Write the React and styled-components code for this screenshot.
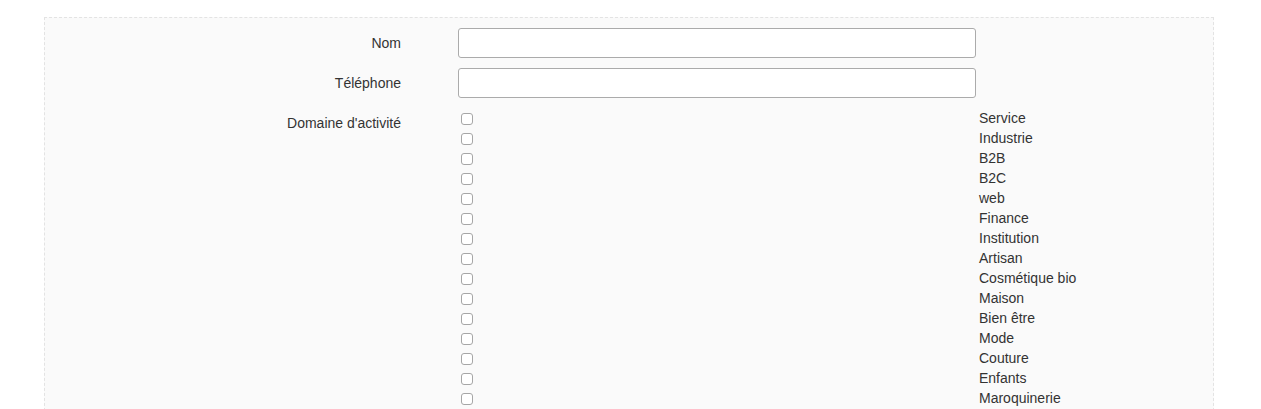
import React from "react";
import styled, { createGlobalStyle } from "styled-components";

const Global = createGlobalStyle`
  html, body { margin: 0; padding: 0; background: #ffffff; }
  body { font-family: "Liberation Sans", Arial, Helvetica, sans-serif; font-size: 14px; color: #333; }
`;

const Panel = styled.div`
  box-sizing: border-box;
  margin: 17px 0 0 44px;
  width: 1170px;
  border: 1px dashed #e3e3e3;
  background: #fafafa;
  padding: 10px 0 12px 0;
  display: flex;
  flex-direction: column;
  gap: 10px;
`;

const Row = styled.div`
  display: flex;
  align-items: ${(p) => (p.$top ? "flex-start" : "center")};
`;

const Label = styled.label`
  width: 356px;
  text-align: right;
  line-height: 20px;
  padding-top: ${(p) => (p.$top ? "5px" : "0")};
  margin-right: 57px;
  color: #333;
`;

const TextInput = styled.input`
  box-sizing: border-box;
  width: 518px;
  height: 30px;
  border: 1px solid #ababab;
  border-radius: 3px;
  background: #fff;
  padding: 0 6px;
  font: inherit;
  outline: none;
`;

const Options = styled.div`
  display: grid;
  grid-template-columns: 521px auto;
  grid-auto-rows: 20px;
  align-items: center;
`;

const Box = styled.input.attrs({ type: "checkbox" })`
  appearance: none;
  -webkit-appearance: none;
  box-sizing: border-box;
  width: 12px;
  height: 12px;
  margin: 1px 0 0 3px;
  border: 1px solid #a6a6a6;
  border-radius: 3px;
  background: #fff;
  justify-self: start;
`;

const OptionText = styled.span`
  line-height: 20px;
  color: #333;
`;

const domaines = [
  "Service",
  "Industrie",
  "B2B",
  "B2C",
  "web",
  "Finance",
  "Institution",
  "Artisan",
  "Cosmétique bio",
  "Maison",
  "Bien être",
  "Mode",
  "Couture",
  "Enfants",
  "Maroquinerie",
];

export default function App() {
  return (
    <>
      <Global />
      <Panel>
        <Row>
          <Label>Nom</Label>
          <TextInput type="text" />
        </Row>
        <Row>
          <Label>Téléphone</Label>
          <TextInput type="text" />
        </Row>
        <Row $top>
          <Label $top>Domaine d'activité</Label>
          <Options>
            {domaines.map((d) => (
              <React.Fragment key={d}>
                <Box />
                <OptionText>{d}</OptionText>
              </React.Fragment>
            ))}
          </Options>
        </Row>
      </Panel>
    </>
  );
}
